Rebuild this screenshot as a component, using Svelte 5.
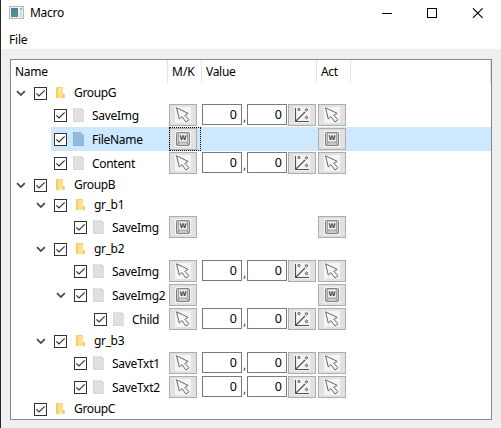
<script>
  const rows = [
    { name: 'GroupG', level: 0, folder: true, open: true },
    { name: 'SaveImg', level: 1, type: 'mouse' },
    { name: 'FileName', level: 1, type: 'key', selected: true },
    { name: 'Content', level: 1, type: 'mouse' },
    { name: 'GroupB', level: 0, folder: true, open: true },
    { name: 'gr_b1', level: 1, folder: true, open: true },
    { name: 'SaveImg', level: 2, type: 'key' },
    { name: 'gr_b2', level: 1, folder: true, open: true },
    { name: 'SaveImg', level: 2, type: 'mouse' },
    { name: 'SaveImg2', level: 2, type: 'key', open: true },
    { name: 'Child', level: 3, type: 'mouse' },
    { name: 'gr_b3', level: 1, folder: true, open: true },
    { name: 'SaveTxt1', level: 2, type: 'mouse' },
    { name: 'SaveTxt2', level: 2, type: 'mouse' },
    { name: 'GroupC', level: 0, folder: true }
  ];
</script>

{#snippet action(type)}
  <span class="btn">
    <svg width="16" height="16" viewBox="0 0 16 16">
      <rect width="16" height="16" fill="#f5f5f5" />
      {#if type === 'mouse'}
        <path d="M1.5 .8 L4.3 12 L6.9 9.6 L11 15 L14 12.8 L9.8 8.2 L13.2 6.4 Z" fill="#f8f8f8" stroke="#686868" />
      {:else if type === 'key'}
        <rect x="1.5" y="1.5" width="13" height="13" rx="1" fill="#cbcbcb" stroke="#818181" />
        <path d="M2 14 L4.5 11 M14 14 L11.5 11" stroke="#858585" />
        <rect x="3.5" y="2" width="9" height="9" rx="1" fill="#f0f0f0" stroke="#929292" stroke-width=".8" />
        <text x="8" y="8.8" text-anchor="middle" class="keycap">W</text>
      {:else}
        <path d="M1.5 1 V14.5 H15 M2 14 L11 5" fill="none" stroke="#505050" stroke-width="1.15" />
        <g fill="#ddd" stroke="#5c5c5c">
          <circle cx="5" cy="2.5" r="1.1" />
          <circle cx="12.5" cy="2.8" r="1.2" />
          <circle cx="12.5" cy="10.5" r="1.2" />
        </g>
      {/if}
    </svg>
  </span>
{/snippet}

<div class="window">
  <header class="title">
    <svg class="app" width="15" height="13" viewBox="0 0 15 13">
      <defs>
        <linearGradient id="screen" x2="0" y2="1"><stop stop-color="#537cac" /><stop offset="1" stop-color="#4a9b73" /></linearGradient>
      </defs>
      <rect x=".5" y=".5" width="14" height="12" fill="#eceff0" stroke="#b6babd" />
      <rect x="2" y="2" width="7" height="9" fill="url(#screen)" />
      <path d="M11 2h2v2h-2z" fill="#9cadb9" /><path d="M11 5h2v6h-2z" fill="#d5d9dc" />
    </svg>
    <span class="caption">Macro</span>
    <svg class="controls" width="102" height="12" viewBox="0 0 102 12" fill="none" stroke="#000">
      <path d="M0 5.5h10" />
      <rect x="45.5" y=".5" width="9" height="9" />
      <path d="M91 .3l9.6 9.6M100.6 .3L91 9.9" stroke-width="1.1" />
    </svg>
  </header>
  <nav>File</nav>
  <main>
    <div class="tree">
      <div class="head">
        <span class="hname">Name</span><span class="hmk">M/K</span><span class="hvalue">Value</span><span class="hact">Act</span><span class="hrest"></span>
      </div>
      {#each rows as row}
        <div class="row" class:group={row.folder} class:selected={row.selected}>
          <div class="name" style="padding-left:{row.level * 20 + 5}px">
            <span class="arrow">
              {#if row.open}
                <svg width="10" height="7" viewBox="0 0 10 7"><path d="M1 1.2L4.9 5.1L8.8 1.2" fill="none" stroke="#484848" stroke-width="1.8" /></svg>
              {/if}
            </span>
            <div class="item">
              <svg class="check" width="13" height="13" viewBox="0 0 13 13"><rect x=".5" y=".5" width="12" height="12" fill="#fff" stroke="#333" /><path d="M2.4 6.3L5 9L10.7 3.3" fill="none" stroke="#333" stroke-width="1.2" /></svg>
              {#if row.folder}
                <svg class="folder" width="9" height="12" viewBox="0 0 9 12"><path d="M0 0h7v6.5l1.5 1V11H2L0 10z" fill="#f6d273" /><path d="M2 1h5v10H2z" fill="#ffe08e" /><path d="M0 0l2 1.4V12L0 10.6z" fill="#f5cd66" /><path d="M7 7h1.5v4H7z" fill="#eec35a" /></svg>
              {:else}
                <svg class="file" width="12" height="14" viewBox="0 0 12 14"><path d="M0 0h8l3 3v11H0z" fill={row.selected ? '#90bbdd' : '#e0e0e0'} /><path d="M8 0v3h3z" fill={row.selected ? '#a9cce8' : '#cecece'} /><path d="M.5 .5v13h10" fill="none" stroke={row.selected ? '#83b0d5' : '#d6d6d6'} /></svg>
              {/if}
              <span class="label">{row.name}</span>
            </div>
          </div>
          <div class="mk" class:focus={row.selected}>{#if row.type}{@render action(row.type)}{/if}</div>
          <div class="value">
            {#if row.type === 'mouse'}
              <span class="field">0</span><span class="comma">,</span><span class="field">0</span>{@render action('points')}
            {/if}
          </div>
          <div class="act">{#if row.type}{@render action(row.type)}{/if}</div>
        </div>
      {/each}
    </div>
  </main>
</div>

<style>
  .window { width: 501px; height: 428px; box-sizing: border-box; border-left: 1px solid #29262b; background: #fff; font: 12px/16px "Noto Sans", "Open Sans", sans-serif; color: #000; display: flex; flex-direction: column; overflow: hidden; }
  .title { height: 27px; display: flex; align-items: flex-start; padding: 0 13px 0 8px; box-sizing: border-box; flex: none; }
  .app { margin-top: 6px; }
  .caption { margin: 5px 0 0 6px; letter-spacing: -.3px; }
  .controls { margin: 8px 4px 0 auto; }
  nav { height: 22px; padding-left: 8px; line-height: 25px; letter-spacing: -.2px; box-sizing: border-box; flex: none; }
  main { flex: 1; background: #efefef; padding: 10px 9px 8px; }
  .tree { width: 482px; height: 361px; box-sizing: border-box; border: 1px solid #828790; background: #fff; }
  .head { height: 23px; display: flex; line-height: 23px; }
  .head span { box-sizing: border-box; border-right: 1px solid #e3e3e3; padding-left: 4px; flex: none; letter-spacing: -.3px; }
  .head .hname { width: 157px; }
  .head .hmk { width: 34px; letter-spacing: 0; }
  .hvalue { width: 115px; }
  .hact { width: 34px; }
  .hrest { width: 140px; }
  .row { height: 24px; display: flex; }
  .group { height: 20px; }
  .name { width: 158px; box-sizing: border-box; display: flex; flex: none; }
  .arrow { width: 15px; display: flex; align-items: flex-start; padding-top: 9px; box-sizing: border-box; flex: none; }
  .group .arrow { padding-top: 7px; }
  .item { flex: 1; display: flex; align-items: flex-start; padding-left: 3px; }
  .selected .item, .selected .mk, .selected .value, .selected .act { background: #cde8ff; }
  .check { margin-top: 6px; flex: none; }
  .group .check { margin-top: 4px; }
  .folder { margin: 4px 9px 0 9px; flex: none; }
  .file { margin: 5px 7px 0 6px; flex: none; }
  .label { margin-top: 5px; letter-spacing: -.3px; white-space: nowrap; }
  .group .label { margin-top: 2px; letter-spacing: -.35px; }
  .mk { width: 33px; box-sizing: border-box; padding-top: 1px; flex: none; position: relative; }
  .focus::after { content: ""; position: absolute; inset: 0 1px 0 0; border: 1px dotted #000; }
  .value { width: 116px; display: flex; padding-top: 1px; box-sizing: border-box; flex: none; }
  .act { flex: 1; padding-top: 1px; }
  .btn { width: 28px; height: 22px; box-sizing: border-box; border: 1px solid #adadad; background: #e1e1e1; display: flex; align-items: center; justify-content: center; flex: none; }
  .field { width: 40px; height: 21px; box-sizing: border-box; border: 1px solid #7a7a7a; background: #fff; text-align: right; padding-right: 4px; line-height: 19px; font-size: 12.5px; flex: none; }
  .comma { width: 5px; text-align: center; line-height: 25px; color: #444; flex: none; }
  .value .btn { margin-left: 1px; }
  .keycap { font: bold 6.5px "DejaVu Sans", sans-serif; fill: #444; }
</style>
